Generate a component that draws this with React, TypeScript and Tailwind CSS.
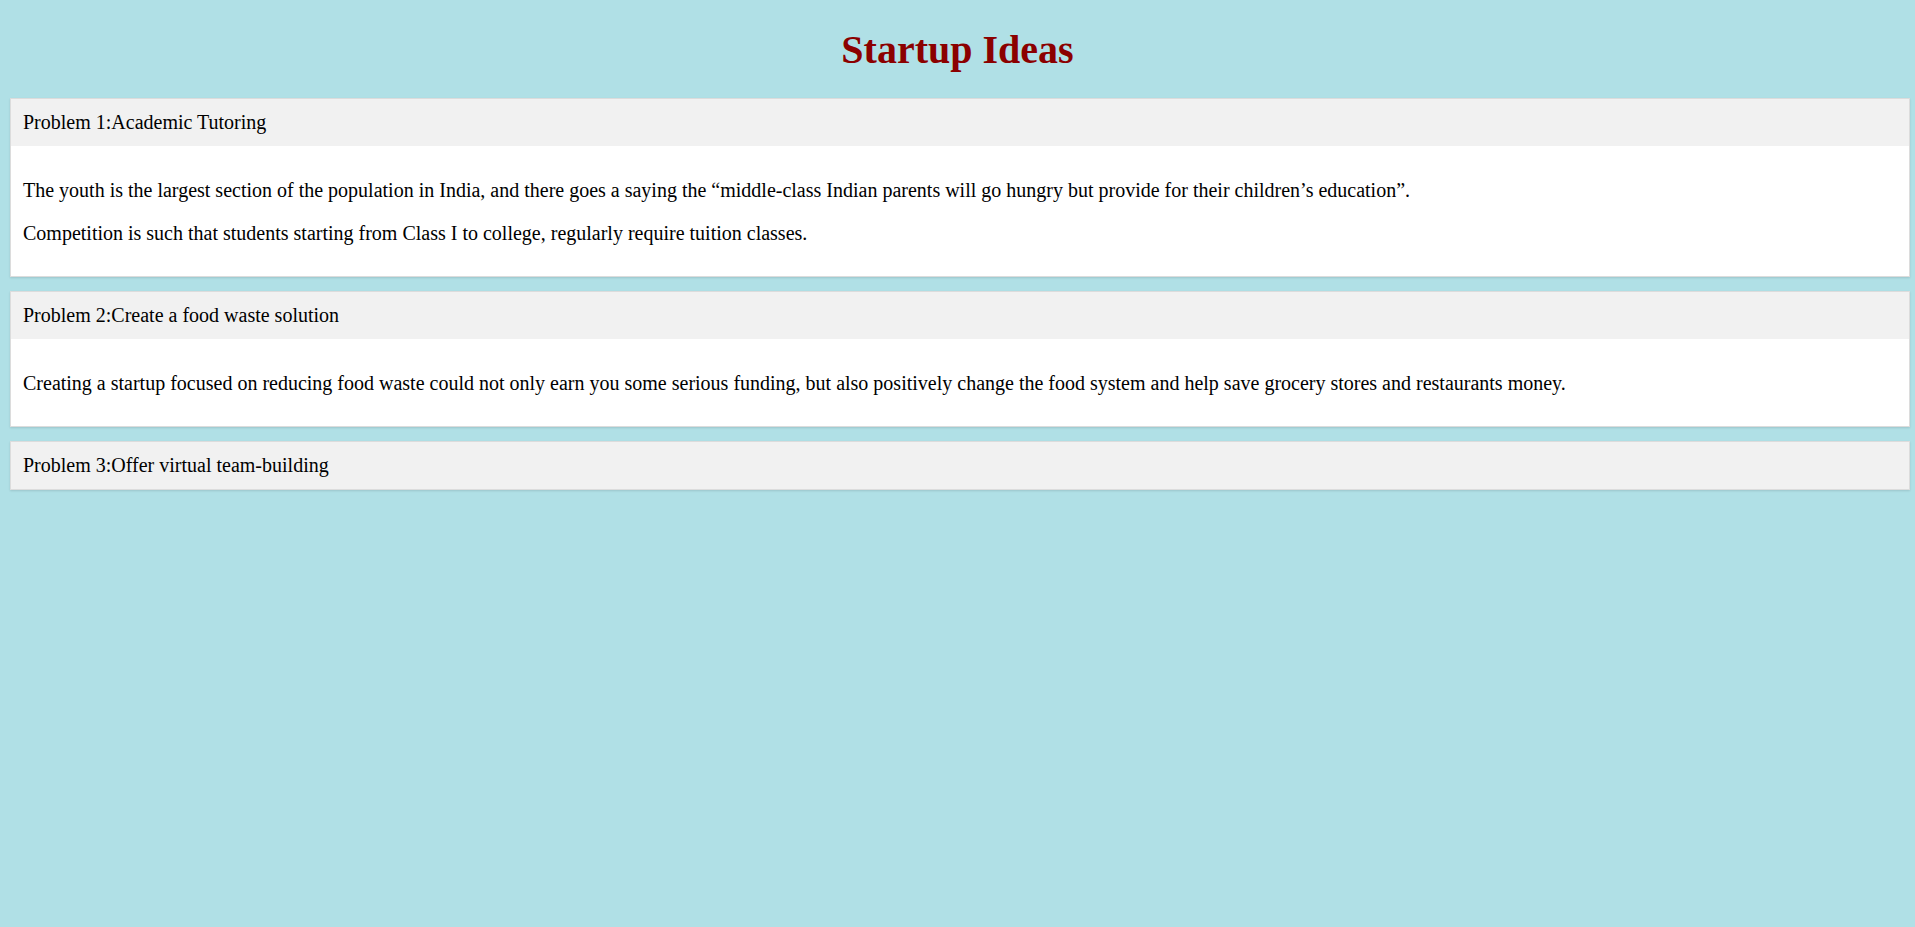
import React from "react";

interface Problem {
  id: number;
  title: string;
  paragraphs: string[];
}

const problems: Problem[] = [
  {
    id: 1,
    title: "Academic Tutoring",
    paragraphs: [
      "The youth is the largest section of the population in India, and there goes a saying the \u201cmiddle-class Indian parents will go hungry but provide for their children\u2019s education\u201d.",
      "Competition is such that students starting from Class I to college, regularly require tuition classes.",
    ],
  },
  {
    id: 2,
    title: "Create a food waste solution",
    paragraphs: [
      "Creating a startup focused on reducing food waste could not only earn you some serious funding, but also positively change the food system and help save grocery stores and restaurants money.",
    ],
  },
  {
    id: 3,
    title: "Offer virtual team-building",
    paragraphs: [],
  },
];

const ProblemCard = ({ id, title, paragraphs }: Problem) => {
  return (
    <div className="border border-[#dcdcdc] bg-white shadow-[0_1px_2px_rgba(0,0,0,0.12)]">
      <div className="bg-[#f1f1f1] px-3 py-3 leading-[23px]">
        Problem {id}:{title}
      </div>
      {paragraphs.length > 0 && (
        <div className="flex flex-col gap-5 px-3 pt-[33px] pb-[31px]">
          {paragraphs.map((text, i) => (
            <p key={i} className="leading-[23px]">
              {text}
            </p>
          ))}
        </div>
      )}
    </div>
  );
};

export default function App() {
  return (
    <div className="min-h-[927px] bg-[#b0e0e6] pt-[27px] font-['Liberation_Serif','Times_New_Roman',serif] text-[20px] text-black">
      <h1 className="text-center text-[40px] font-bold leading-[46px] text-[#8b0000]">
        Startup Ideas
      </h1>
      <div className="mt-[25px] flex flex-col gap-[14px] pl-[10px] pr-[5px]">
        {problems.map((p) => (
          <ProblemCard key={p.id} {...p} />
        ))}
      </div>
    </div>
  );
}
